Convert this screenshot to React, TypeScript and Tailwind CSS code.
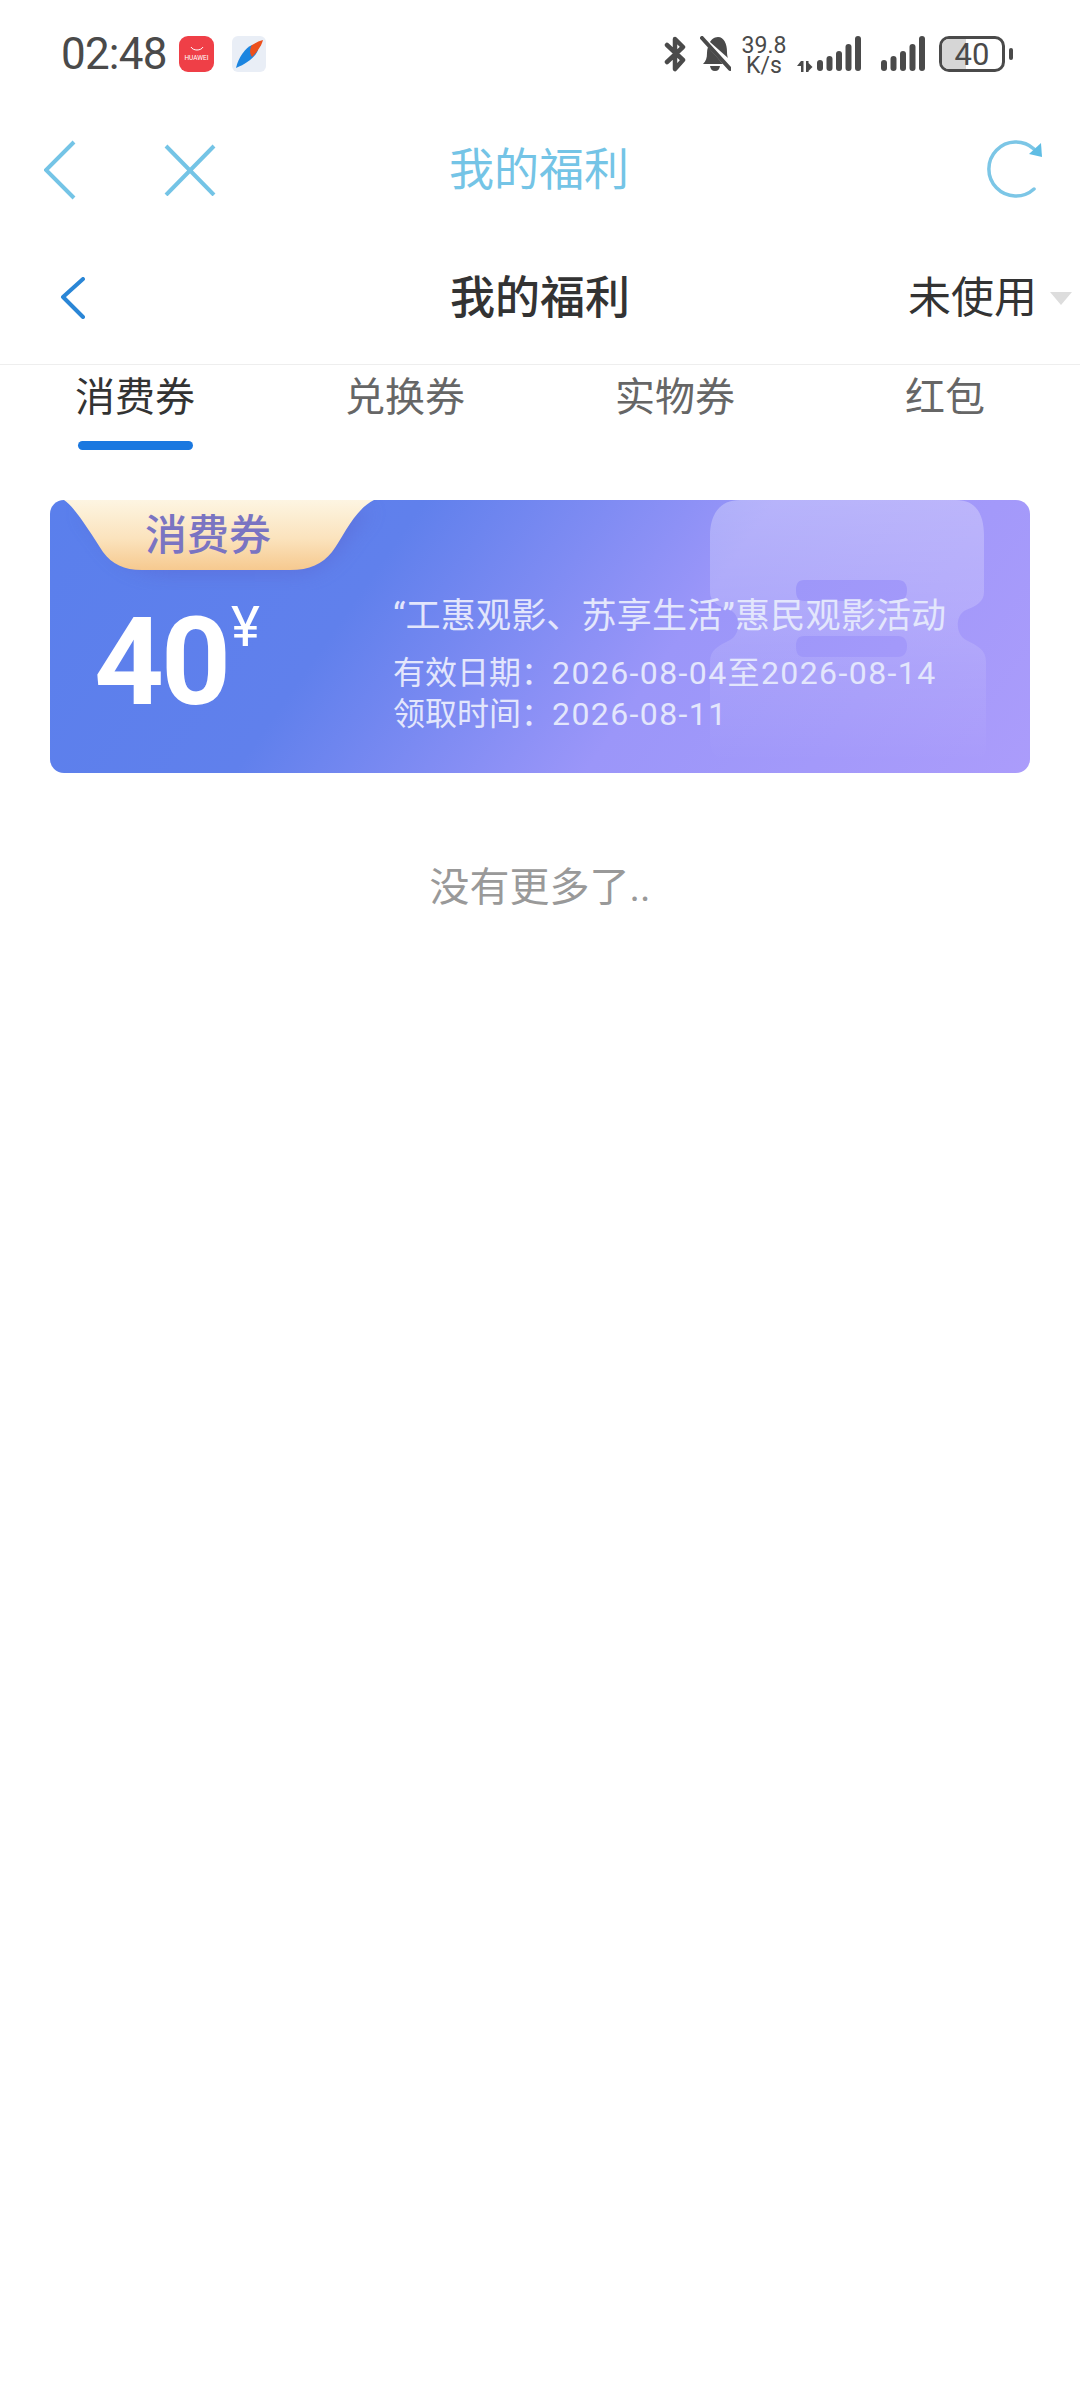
const tabs = [
  { label: "消费券", active: true },
  { label: "兑换券", active: false },
  { label: "实物券", active: false },
  { label: "红包", active: false },
];

function BluetoothOff() {
  return (
    <svg width="22" height="36" viewBox="0 0 22 36" fill="none" stroke="#4a4a4a" strokeWidth="4.5" strokeLinecap="round" strokeLinejoin="round">
      <path d="M3 9 19 24 11 33V3l8 8-16 15" />
    </svg>
  );
}

function BellOff() {
  return (
    <svg width="31" height="36" viewBox="0 0 31 36" fill="none">
      <path d="M3 28c3-3 4-6 4-11 0-2 .3-4 1-6l15 17H3Z" fill="#4a4a4a" />
      <path d="M10 6c1-2 4-5 8-5 6 0 9 7 9 15 0 3 .5 5 1 6L10 6Z" fill="#4a4a4a" />
      <path d="M10 30h10c-.5 3-2 5-5 5s-4.500-2-5-5Z" fill="#4a4a4a" />
      <path d="M2 2l28 31" stroke="#4a4a4a" strokeWidth="4" strokeLinecap="round" />
    </svg>
  );
}

function Signal({ withArrows }: { withArrows?: boolean }) {
  const tops = [24, 20, 15, 8, 0];
  return (
    <svg width={withArrows ? 64 : 44} height="36" viewBox={`0 0 ${withArrows ? 64 : 44} 36`} fill="#4a4a4a">
      {withArrows && <path d="M0 30l4-5h2.500v11H4v-6Zm9-5h2.500v2l4 4-4 4v1H9Z" />}
      {tops.map((t, i) => (
        <rect key={i} x={(withArrows ? 20 : 0) + i * 9.5} y={t} width="6" height={35 - t} rx="3" />
      ))}
    </svg>
  );
}

function Refresh() {
  return (
    <svg width="60" height="60" viewBox="0 0 60 60" fill="none">
      <path d="M47 49A27 27 0 1 1 47 9" stroke="#7cc6e6" strokeWidth="3.500" strokeLinecap="round" />
      <path d="M54 3 55 17 42 14Z" fill="#5fbde4" />
    </svg>
  );
}

function Ribbon() {
  return (
    <svg className="absolute left-0 top-0" width="340" height="90" viewBox="0 0 340 90" fill="none">
      <defs>
        <linearGradient id="ribbon" x1="0" y1="0" x2="0" y2="1">
          <stop offset="0" stopColor="#fdf5e2" />
          <stop offset="0.55" stopColor="#fbe3bd" />
          <stop offset="1" stopColor="#f6c98f" />
        </linearGradient>
        <filter id="glow" x="-20%" y="-40%" width="140%" height="200%">
          <feGaussianBlur stdDeviation="10" />
        </filter>
      </defs>
      <path d="M30 10C60 40 60 72 125 74H240C290 72 290 36 322 10Z" fill="#5a5fc8" opacity="0.4" filter="url(#glow)" />
      <path d="M14 0C24 6 40 32 53 52C62 64 74 70 92 70H240C260 70 272 64 282 52C294 36 304 10 324 0Z" fill="url(#ribbon)" />
    </svg>
  );
}

function Watermark() {
  return (
    <svg className="absolute right-[44px] top-0" width="276" height="273" viewBox="0 0 276 273" fill="none">
      <defs>
        <linearGradient id="mark" x1="0" y1="0" x2="0" y2="1">
          <stop offset="0" stopColor="#fff" stopOpacity="0.28" />
          <stop offset="0.4" stopColor="#fff" stopOpacity="0.18" />
          <stop offset="0.7" stopColor="#fff" stopOpacity="0.08" />
          <stop offset="1" stopColor="#fff" stopOpacity="0" />
        </linearGradient>
      </defs>
      <path
        fillRule="evenodd"
        d="M30 0H246C266 0 274 14 274 36V92C274 102 266 106 256 110C245 115 245 134 256 140C268 146 276 150 276 162V245C276 262 266 262 250 262H30C10 262 0 256 0 240V162C0 150 8 146 20 140C31 134 31 115 20 110C8 106 0 102 0 92V36C0 14 10 0 30 0ZM94 80C88 80 86 84 86 90C86 97 88 101 94 101H188C194 101 197 97 197 90C197 84 194 80 188 80ZM94 136C88 136 86 140 86 146C86 153 88 157 94 157H188C194 157 197 153 197 146C197 140 194 136 188 136Z"
        fill="url(#mark)"
      />
    </svg>
  );
}

export default function App() {
  return (
    <div lang="zh-CN" className="min-h-[2387px] w-[1080px] bg-white font-[family-name:Roboto,'Noto_Sans_CJK_SC',sans-serif]">
      {/* status bar */}
      <div className="flex h-[110px] items-start pt-[36px] text-[#4a4a4a]">
        <span className="ml-[61px] w-[107px] text-[44px] leading-[36px] tracking-[-0.8px]">02:48</span>
        <div className="ml-[11px] flex h-[36px] w-[35px] flex-col items-center justify-center rounded-[9px] bg-[#ef3f47]">
          <svg width="14" height="6" viewBox="0 0 14 6" fill="none">
            <path d="M1 1c2 4 10 4 12 0" stroke="#fff" strokeWidth="1" />
          </svg>
          <span className="mt-[2px] text-[6.500px] leading-[8px] text-white">HUAWEI</span>
        </div>
        <div className="ml-[18px] h-[36px] w-[34px] rounded-[6px] bg-[#e9eef6]">
          <svg width="34" height="36" viewBox="0 0 34 36">
            <path d="M4 32C6 22 14 11 20 9L26 14C23 22 14 28 4 32Z" fill="#1b85e0" />
            <path d="M20 9C23 7 27 5 31 4C30 8 28 11 26 14C24 17 22 19 20 21C17 17 18 12 20 9Z" fill="#ec4f1c" />
          </svg>
        </div>
        <div className="ml-[398px]"><BluetoothOff /></div>
        <div className="ml-[14px]"><BellOff /></div>
        <div className="ml-[11px] flex w-[44px] flex-col items-center text-[23px] leading-[20px]">
          <span>39.8</span>
          <span>K/s</span>
        </div>
        <div className="ml-[11px]"><Signal withArrows /></div>
        <div className="ml-[20px]"><Signal /></div>
        <div className="relative ml-[14px] flex h-[36px] w-[66px] items-center justify-center overflow-hidden rounded-[10px] border-[3.500px] border-[#4a4a4a]">
          <div className="absolute inset-y-0 left-0 w-[24px] bg-[#d6d6d6]" />
          <span className="relative text-[31px] leading-none">40</span>
        </div>
        <div className="ml-[4px] mt-[12px] h-[12px] w-[4px] rounded-full bg-[#4a4a4a]" />
      </div>

      {/* webview title bar */}
      <div className="flex h-[120px] items-center text-[#74c4e6]">
        <svg className="ml-[44px]" width="32" height="60" viewBox="0 0 32 60" fill="none" stroke="#74c4e6" strokeWidth="4">
          <path d="M30 2 2 30l28 28" />
        </svg>
        <svg className="ml-[88px]" width="52" height="52" viewBox="0 0 52 52" fill="none" stroke="#74c4e6" strokeWidth="4">
          <path d="M2 2l48 49M50 2 2 51" />
        </svg>
        <span className="ml-[233px] text-[45px] leading-none">我的福利</span>
        <div className="ml-auto mr-[33px]"><Refresh /></div>
      </div>

      {/* page header */}
      <div className="flex h-[135px] items-center border-b border-[#eeeeee] pt-[2px]">
        <svg className="ml-[60px]" width="26" height="42" viewBox="0 0 26 42" fill="none" stroke="#2a86d6" strokeWidth="4" strokeLinecap="round" strokeLinejoin="round">
          <path d="M23 2 3 20l20 20" />
        </svg>
        <span className="ml-[364px] text-[45px] font-medium leading-none text-[#333333]">我的福利</span>
        <span className="ml-[278px] text-[43px] leading-none text-[#333333]">未使用</span>
        <div className="ml-[13px] h-0 w-0 border-x-[11px] border-t-[13px] border-x-transparent border-t-[#dddddd]" />
      </div>

      {/* tabs */}
      <div className="grid grid-cols-4">
        {tabs.map((t) => (
          <div key={t.label} className="flex flex-col items-center pt-[11px]">
            <span className={`text-[40px] leading-[44px] ${t.active ? "text-[#333333]" : "text-[#666666]"}`}>{t.label}</span>
            <div className={`mt-[21px] h-[9px] w-[115px] rounded-full ${t.active ? "bg-[#1a78e0]" : "bg-transparent"}`} />
          </div>
        ))}
      </div>

      {/* coupon */}
      <div className="px-[50px] pt-[50px]">
        <div className="relative h-[273px] overflow-hidden rounded-[14px] bg-[linear-gradient(125deg,#5a7fec_0%,#6080ec_32%,#9b96f9_62%,#ab9cfb_100%)]">
          <Watermark />
          <Ribbon />
          <span className="absolute left-[95px] top-[11px] text-[42px] font-medium leading-[50px] text-[#7a74c2]">消费券</span>
          <div className="relative flex pl-[44px] pt-[105px]">
            <span className="w-[137px] text-[122px] font-bold leading-[115px] tracking-[-3px] text-white">40</span>
            <span className="w-[32px] -mt-[8px] text-[55px] leading-[60px] text-white">¥</span>
            <div className="ml-[130px] mt-[-8px] flex flex-col text-[#e3e6fc]">
              <span className="whitespace-nowrap text-[35px] leading-[40px] tracking-[0.2px]">“工惠观影、苏享生活”惠民观影活动</span>
              <div className="mt-[16px] flex whitespace-nowrap text-[32px] leading-[41px]">
                <span className="w-[159px] shrink-0">有效日期：</span>
                <span className="tracking-[1.4px]">2026-08-04至2026-08-14</span>
              </div>
              <div className="flex whitespace-nowrap text-[32px] leading-[41px]">
                <span className="w-[159px] shrink-0">领取时间：</span>
                <span className="tracking-[1.4px]">2026-08-11</span>
              </div>
            </div>
          </div>
        </div>
      </div>

      <p className="mt-[90px] text-center text-[40px] leading-[50px] text-[#999999]">没有更多了..</p>
    </div>
  );
}
